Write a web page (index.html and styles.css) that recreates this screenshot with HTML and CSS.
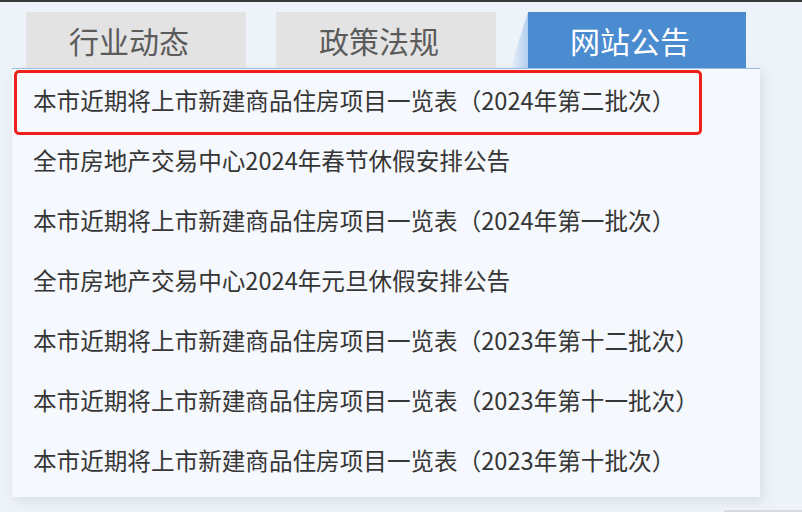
FILE: index.html
```html
<!DOCTYPE html>
<html lang="zh-CN">
<head>
<meta charset="utf-8">
<link rel="stylesheet" href="styles.css">
</head>
<body>
<div class="topline"></div>
<div class="tabs">
  <div class="tab">行业动态</div>
  <div class="tab">政策法规</div>
  <div class="tab active">网站公告</div>
</div>
<div class="panel">
  <ul class="list">
    <li>本市近期将上市新建商品住房项目一览表（2024年第二批次）</li>
    <li>全市房地产交易中心2024年春节休假安排公告</li>
    <li>本市近期将上市新建商品住房项目一览表（2024年第一批次）</li>
    <li>全市房地产交易中心2024年元旦休假安排公告</li>
    <li>本市近期将上市新建商品住房项目一览表（2023年第十二批次）</li>
    <li>本市近期将上市新建商品住房项目一览表（2023年第十一批次）</li>
    <li>本市近期将上市新建商品住房项目一览表（2023年第十批次）</li>
  </ul>
</div>
<div class="highlight"></div>
<div class="corner"></div>
</body>
</html>
```
FILE: styles.css
```css
html, body {
  margin: 0;
  padding: 0;
}
body {
  width: 802px;
  height: 512px;
  overflow: hidden;
  background: #eef3f9;
  font-family: "Noto Sans CJK SC", "Noto Sans", sans-serif;
  position: relative;
}
.topline {
  height: 2px;
  background: #3a3a3a;
}
.tabs {
  display: flex;
  gap: 30px;
  padding-left: 26px;
  margin-top: 10px;
  height: 56px;
}
.tab {
  width: 206px;
  padding-right: 14px;
  height: 56px;
  background: #e3e3e3;
  color: #5b5b5b;
  font-size: 30px;
  line-height: 56px;
  text-align: center;
  position: relative;
}
.tab.active {
  margin-left: 2px;
  width: 204px;
  background: #4b8bd0;
  color: #ffffff;
}
.tab.active::before {
  content: "";
  position: absolute;
  left: -18px;
  top: 0;
  width: 18px;
  height: 56px;
  background: linear-gradient(to right, rgba(150,190,235,0) 0%, rgba(150,190,235,0.7) 100%);
  clip-path: polygon(100% 0, 100% 100%, 0 100%);
}
.panel {
  margin-left: 12px;
  width: 748px;
  height: 428px;
  background: #f5f8fc;
  border-top: 1px solid #9bbce3;
  box-shadow: 3px 4px 10px rgba(150,160,175,0.25);
}
.list {
  list-style: none;
  margin: 0;
  padding: 1px 0 0 21px;
}
.list li {
  height: 60px;
  line-height: 60px;
  font-size: 23.6px;
  color: #363636;
  white-space: nowrap;
}
.highlight {
  position: absolute;
  left: 14px;
  top: 70px;
  width: 682px;
  height: 59px;
  border: 3px solid #ef1f1a;
  border-radius: 5px;
}
.corner {
  position: absolute;
  right: 0;
  bottom: 0;
  width: 78px;
  height: 2px;
  background: #d8dadd;
}
```
